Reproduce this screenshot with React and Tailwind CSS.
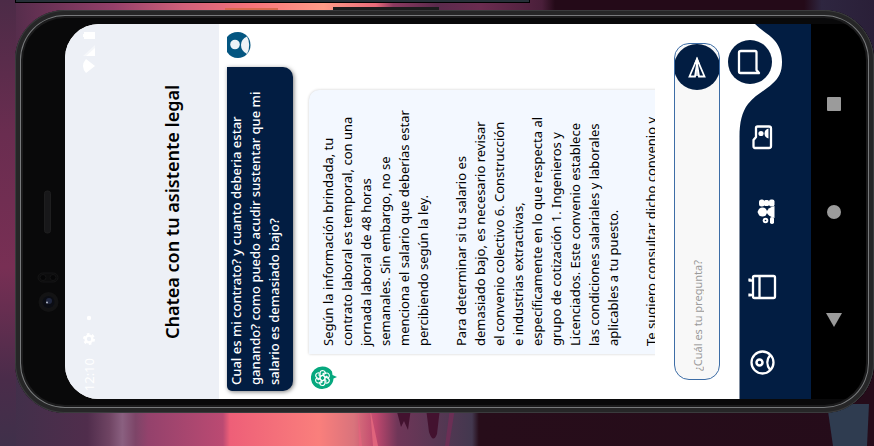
const vertical = "[writing-mode:vertical-rl] rotate-180";

const question = [
  "Cual es mi contrato? y cuanto deberia estar",
  "ganando? como puedo acudir sustentar que mi",
  "salario es demasiado bajo?",
];

const answer = [
  [
    "Según la información brindada, tu",
    "contrato laboral es temporal, con una",
    "jornada laboral de 48 horas",
    "semanales. Sin embargo, no se",
    "menciona el salario que deberías estar",
    "percibiendo según la ley.",
  ],
  [
    "Para determinar si tu salario es",
    "demasiado bajo, es necesario revisar",
    "el convenio colectivo 6. Construcción",
    "e industrias extractivas,",
    "específicamente en lo que respecta al",
    "grupo de cotización 1. Ingenieros y",
    "Licenciados. Este convenio establece",
    "las condiciones salariales y laborales",
    "aplicables a tu puesto.",
  ],
  ["Te sugiero consultar dicho convenio y"],
];

function Backdrop() {
  return (
    <svg className="absolute inset-0 -z-10 h-full w-full" viewBox="0 0 874 446" preserveAspectRatio="none" aria-hidden="true">
      <defs>
        <linearGradient id="sky">
          <stop offset="0" stopColor="#4c2b47" />
          <stop offset=".06" stopColor="#6d3357" />
          <stop offset=".13" stopColor="#94406a" />
          <stop offset=".21" stopColor="#d0607a" />
          <stop offset=".29" stopColor="#f8747a" />
          <stop offset=".37" stopColor="#ff9c88" />
          <stop offset=".43" stopColor="#e96a7a" />
          <stop offset=".45" stopColor="#8c3a60" />
          <stop offset=".5" stopColor="#5a2a4c" />
          <stop offset=".55" stopColor="#6b2c50" />
          <stop offset=".62" stopColor="#4a1f3a" />
          <stop offset=".635" stopColor="#240a18" />
          <stop offset=".92" stopColor="#240a18" />
          <stop offset=".94" stopColor="#2e2640" />
          <stop offset="1" stopColor="#2a1f38" />
        </linearGradient>
        <linearGradient id="lake">
          <stop offset="0" stopColor="#3f304a" />
          <stop offset=".1" stopColor="#502d4c" />
          <stop offset=".125" stopColor="#6f4463" />
          <stop offset=".14" stopColor="#8a6080" />
          <stop offset=".155" stopColor="#7d4568" />
          <stop offset=".17" stopColor="#94426c" />
          <stop offset=".255" stopColor="#bb4a72" />
          <stop offset=".263" stopColor="#ee5f78" />
          <stop offset=".365" stopColor="#fa7f7c" />
          <stop offset=".405" stopColor="#d9737c" />
          <stop offset=".43" stopColor="#c0486e" />
          <stop offset=".455" stopColor="#6f3658" />
          <stop offset=".54" stopColor="#43384f" />
          <stop offset=".548" stopColor="#270d1a" />
          <stop offset="1" stopColor="#250c1a" />
        </linearGradient>
        <linearGradient id="edge" x1="0" y1="0" x2="0" y2="1">
          <stop offset="0" stopColor="#4c2b47" />
          <stop offset=".3" stopColor="#6a2d50" />
          <stop offset=".6" stopColor="#782f54" />
          <stop offset=".85" stopColor="#4a2c4a" />
          <stop offset="1" stopColor="#3f304a" />
        </linearGradient>
      </defs>
      <rect width="874" height="223" fill="url(#sky)" />
      <rect y="223" width="874" height="223" fill="url(#lake)" />
      <rect width="16" height="446" fill="url(#edge)" />
      <path d="M358 408l4 38h-3zM370 408l8 38h-5z" fill="#e0647c" />
      <path d="M396 408h15l-3 22-4-9-3 6zM426 408h14l-3 26q-4 10-8-2z" fill="#43122f" />
      <path d="M450 408h5l-6 38h-4z" fill="#6b2f55" />
      <path d="M827 404h42l-2 42h-34z" fill="#2f3c50" />
    </svg>
  );
}

function Hardware() {
  return (
    <svg className="my-auto h-[375px] w-[50px] shrink-0" viewBox="0 0 50 375" aria-hidden="true">
      <rect x="29.5" y="167" width="6" height="42" rx="2.5" fill="#18181a" stroke="#1e1e1f" />
      <rect x="23" y="249" width="20" height="9" rx="4.5" fill="#0c0c0d" stroke="#151516" />
      <circle cx="28" cy="253.5" r="3" fill="#060607" stroke="#141415" />
      <circle cx="38" cy="253.5" r="3" fill="#060607" stroke="#141415" />
      <circle cx="33.5" cy="278" r="10" fill="#131314" />
      <circle cx="33.5" cy="278" r="6" fill="#0b0d14" />
      <circle cx="34" cy="277" r="3" fill="#20273f" />
      <circle cx="32" cy="278.5" r="1" fill="#b4bac8" />
    </svg>
  );
}

function StatusBar() {
  return (
    <div className="flex w-4 shrink-0 flex-col items-center justify-between pt-2 pb-2 text-white">
      <svg className="h-[42px] w-3" viewBox="0 0 12 42" fill="currentColor" aria-hidden="true">
        <path d="M1 0h11v7H1V5H0V2h1z" />
        <path d="M12 13v11L0 24z" opacity=".45" />
        <path d="M12 16v8H3z" />
        <path d="M12 34L3 41q-6-7 0-14z" />
      </svg>
      <div className="flex flex-col items-center gap-3">
        <svg className="h-[31px] w-3" viewBox="0 0 12 31" fill="currentColor" aria-hidden="true">
          <circle cx="6" cy="3" r="2.2" />
          <circle cx="6" cy="24" r="3.4" fill="none" stroke="currentColor" strokeWidth="2.4" />
          <circle cx="6" cy="24" r="5" fill="none" stroke="currentColor" strokeWidth="2" strokeDasharray="2.6 2.6" />
        </svg>
        <span className={`${vertical} text-[13px] leading-4`}>12:10</span>
      </div>
    </div>
  );
}

function UserAvatar() {
  return (
    <svg className="h-[26px] w-6 shrink-0" viewBox="0 0 24 26" role="img" aria-label="Usuario">
      <path d="M0 5Q4 0 11 0a12.5 13 0 0 1 0 26Q4 26 0 20z" fill="#045681" />
      <circle cx="8" cy="12.500" r="4.800" fill="#eef3f7" />
      <path d="M20 4.5q-6 2.500-6 8.500t6 9q2.200-4 2.200-9T20 4.500z" fill="#eef3f7" />
    </svg>
  );
}

function BotAvatar() {
  const petals = [0, 60, 120, 180, 240, 300];
  return (
    <svg className="ml-[2px] h-6 w-[27px] shrink-0" viewBox="0 0 27 24" role="img" aria-label="Asistente">
      <path d="M11.5.5q6 0 9.500 5l.5 3.500 4.500 2-3.500 1.500A11.300 11.300 0 1 1 11.500.5z" fill="#06a87e" />
      <g fill="none" stroke="#fff" strokeWidth="1.100" strokeLinejoin="round">
        {petals.map((a) => (
          <path key={a} transform={`rotate(${a} 11.5 12)`} d="M11.500 9.200l-2.400 1.400V6.800q.2-2.300 2.600-2.300 2 .1 2.700 2l-2.900 1.600" />
        ))}
        <path d="M11.500 9.200l2.400 1.400v2.800l-2.400 1.400-2.400-1.400v-2.800z" />
      </g>
    </svg>
  );
}

function Composer() {
  return (
    <form className="mx-[19px] my-[19px] flex w-[46px] shrink-0 flex-col items-center overflow-hidden rounded-[15px] border border-[#3d6da6] bg-[#f8f8f8]" onSubmit={(e) => e.preventDefault()}>
      <button type="submit" aria-label="Enviar" className="-mx-px size-[46px] shrink-0 rounded-full bg-[#021d42]">
        <svg viewBox="0 0 46 46" fill="none" stroke="#fff" strokeWidth="1.8" aria-hidden="true">
          <path d="M23 15L15.500 32.500h5.500L23 20l2 12.500h5.500z" />
          <path d="M23 12.500l2.800 7.500h-5.600z" fill="#fff" stroke="none" />
          <path d="M23 16v16" strokeWidth="1.5" stroke="#fff" />
        </svg>
      </button>
      <input aria-label="Pregunta" placeholder="¿Cuál es tu pregunta?" className={`${vertical} min-h-0 w-full flex-1 bg-transparent pt-2 text-[11px] outline-none placeholder:text-[#9a9a9a]`} />
    </form>
  );
}

const tabs = [
  {
    name: "Chat",
    icon: <path d="M13 11h14q1.500 0 1.500 1.500V30l2.500 3H12.500Q11 33 11 31.500V12.500Q11 11 13 11z" />,
    active: true,
  },
  {
    name: "Casos",
    icon: (
      <>
        <path d="M17.500 11.500H29q2 0 2 2V31q0 2-2 2H15q-1.500 0-1.500-2v-6l2.500-3v-9q0-1.500 1.500-1.500z" />
        <circle cx="21" cy="18.500" r="2.600" fill="#fff" stroke="none" />
        <path d="M28.500 13.500q-4 1-4 5t4 5z" fill="#fff" stroke="none" />
      </>
    ),
  },
  {
    name: "Comunidad",
    icon: (
      <g fill="#fff" stroke="none">
        <rect x="19" y="9.500" width="5.500" height="7" rx="2.500" />
        <rect x="24" y="10" width="5" height="6" rx="1.500" />
        <rect x="29" y="9.500" width="5.500" height="7" rx="2" />
        <circle cx="22.500" cy="22" r="4.600" />
        <path d="M17 22l3-1.500v3z" />
        <path d="M34.500 16v12q-6.500-1.500-8-6 1.500-4.500 8-6z" />
        <circle cx="25.500" cy="30.500" r="2.800" />
        <circle cx="25.500" cy="30.500" r=".8" fill="#021d42" />
        <rect x="30" y="27" width="4" height="7" rx="1.800" />
      </g>
    ),
  },
  {
    name: "Documentos",
    icon: (
      <>
        <rect x="13" y="11" width="22" height="22" rx="1.500" />
        <path d="M19.500 11v22M9 15.500h4M9 30h4M9.500 13.500v3M9.500 28.500v3" />
      </>
    ),
  },
  {
    name: "Perfil",
    icon: (
      <>
        <circle cx="22.500" cy="22.500" r="11" />
        <circle cx="19.500" cy="22.500" r="3" strokeWidth="2.500" />
        <path d="M30.500 14.500q-6.500 8 0 16" />
      </>
    ),
  },
];

function TabBar() {
  return (
    <nav className="relative -ml-[11px] w-[83px] shrink-0 overflow-hidden" aria-label="Principal">
      <svg className="absolute top-0 left-0 h-[2000px] w-[83px]" viewBox="0 0 83 2000" aria-hidden="true">
        <path d="M27 0C34 7 42 11 47 17C52 23 54 30 54 38C54 48 51 54 44 60C38 66 27 71 20 80C14 88 11.500 98 11.500 113V2000H83V0Z" fill="#021d42" />
      </svg>
      <div className="relative grid h-full grid-rows-5 items-center">
        {tabs.map((t) => (
          <button key={t.name} type="button" aria-label={t.name} className={t.active ? "size-11 rounded-full bg-[#021d42]" : "ml-3 size-11"}>
            <svg viewBox="0 0 44 44" fill="none" stroke="#fff" strokeWidth="2.300" strokeLinejoin="round" aria-hidden="true">
              {t.icon}
            </svg>
          </button>
        ))}
      </div>
    </nav>
  );
}

function SystemKeys() {
  return (
    <div className="flex w-[63px] shrink-0 flex-col items-start justify-center gap-[94px] bg-black pl-4">
      <button type="button" aria-label="Recientes" className="size-[14px] rounded-[1px] bg-[#9b9b9b]" />
      <button type="button" aria-label="Inicio" className="size-[14px] rounded-full bg-[#9b9b9b]" />
      <button type="button" aria-label="Atrás" className="size-[14px]">
        <svg viewBox="0 0 14 14" className="overflow-visible" aria-hidden="true">
          <path d="M-1 0h16L7 14z" fill="#9b9b9b" />
        </svg>
      </button>
    </div>
  );
}

export default function App() {
  return (
    <div className="relative isolate flex h-screen flex-col overflow-hidden font-['Noto_Sans',sans-serif] text-black">
      <Backdrop />
      <div className="mr-[344px] ml-[15px] h-[3px] shrink-0 border border-t-0 border-black bg-[#263038]" />
      <div className="flex h-[7px] shrink-0 items-end pl-[225px]">
        <div className="h-[2px] w-[53px] bg-[#d9694e]" />
        <div className="ml-[55px] h-[3px] w-[106px] bg-[#1c1c1d]" />
      </div>
      <div className="relative mb-[33px] ml-[15px] flex min-h-0 flex-1 overflow-hidden rounded-[50px] bg-[#09090a] py-[14px]">
        <Hardware />
        <main className="flex min-w-0 flex-1 overflow-hidden rounded-l-[34px] bg-white">
          <header className="flex w-[154px] shrink-0 bg-[#edf0f6] pl-4">
            <StatusBar />
            <h1 className={`${vertical} ml-[59px] w-8 text-center text-[18px] leading-8 font-semibold`}>Chatea con tu asistente legal</h1>
          </header>
          <section className="flex min-w-0 flex-1 gap-4 overflow-hidden pl-2" aria-label="Conversación">
            <article className="flex w-[66px] shrink-0 flex-col gap-[9px] py-2">
              <UserAvatar />
              <div className="flex min-h-0 flex-1 rounded-r-[10px] rounded-bl-[5px] bg-[#021d42] shadow-[1px_1px_4px_#00000080]">
                <p className={`${vertical} pt-[6px] pl-[4px] text-[13px] leading-[19px] font-medium whitespace-nowrap text-white`}>
                  {question.map((line) => (
                    <span key={line} className="block">{line}</span>
                  ))}
                </p>
              </div>
            </article>
            <article className="flex shrink-0 flex-col gap-3 pt-[66px] pb-[9px]">
              <div className="flex min-h-0 flex-1 rounded-tl-[10px] bg-[#f3f8ff] pl-[10px] shadow-[0_0_3px_#00000033]">
                <div className={`${vertical} pt-2 text-[13px] leading-[19px] whitespace-nowrap`}>
                  {answer.map((paragraph) => (
                    <p key={paragraph[0]} className="ml-[19px]">
                      {paragraph.map((line) => (
                        <span key={line} className="block">{line}</span>
                      ))}
                    </p>
                  ))}
                </div>
              </div>
              <BotAvatar />
            </article>
          </section>
          <Composer />
          <TabBar />
        </main>
        <SystemKeys />
        <div className="pointer-events-none absolute inset-0 rounded-[50px] shadow-[inset_0_0_0_1px_#3a3b3d,inset_0_0_0_5px_#262627,inset_0_0_0_6px_#77797b,inset_0_0_0_8px_#1b1b1c]" />
      </div>
    </div>
  );
}
